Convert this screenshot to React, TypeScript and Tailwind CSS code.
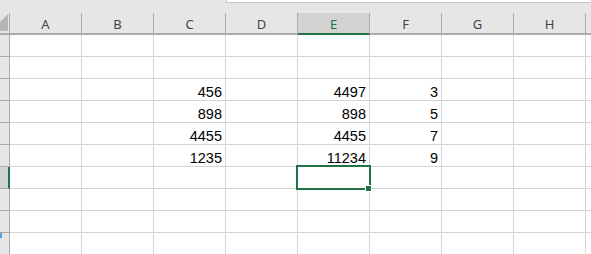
const columns = ["A", "B", "C", "D", "E", "F", "G", "H", "I"];

// values keyed by row index (1-based), then column letter
const data: Record<number, Record<string, string>> = {
  3: { C: "456", E: "4497", F: "3" },
  4: { C: "898", E: "898", F: "5" },
  5: { C: "4455", E: "4455", F: "7" },
  6: { C: "1235", E: "11234", F: "9" },
};

const rows = [1, 2, 3, 4, 5, 6, 7, 8, 9, 10];
const activeCol = "E";
const activeRow = 7;

function ColumnHeader({ name }: { name: string }) {
  const active = name === activeCol;
  // column I is mostly off screen, its letter is not visible
  const label = name === "I" ? "" : name;
  return (
    <div
      className={`w-[72px] shrink-0 h-full flex justify-center pt-[2px] text-[13px] border-r border-[#ababab] border-b-2 ${
        active ? "bg-[#d2d2d2] border-b-[#217346] text-[#217346]" : "border-b-[#ababab] text-[#444444]"
      }`}
      style={{ fontFamily: '"Noto Sans", "Open Sans", sans-serif' }}
    >
      {label}
    </div>
  );
}

function Cell({ row, col }: { row: number; col: string }) {
  const value = data[row]?.[col];
  const selected = row === activeRow && col === activeCol;
  return (
    <div className="relative w-[72px] shrink-0 h-full border-r border-b border-[#d4d4d4] flex items-end justify-end pr-[3px] pb-[1px]">
      {value && (
        <span
          className="text-[14.5px] leading-none text-black"
          style={{ fontFamily: '"Liberation Sans", Arial, sans-serif' }}
        >
          {value}
        </span>
      )}
      {selected && (
        <>
          <div className="absolute -left-[2px] -top-[2px] w-[75px] h-[25px] border-2 border-[#217346] z-10" />
          <div className="absolute left-[67px] top-[18px] w-[7px] h-[7px] bg-[#217346] border border-white z-20" />
        </>
      )}
    </div>
  );
}

export default function App() {
  return (
    <div className="w-[591px] h-[254px] overflow-hidden bg-white select-none">
      {/* formula bar edge */}
      <div className="h-[13px] bg-[#e6e6e6] flex">
        <div className="w-[226px] shrink-0" />
        <div className="flex-1 h-[3px] bg-white border-b border-l border-[#c6c6c6]" />
      </div>

      {/* column headers */}
      <div className="h-[22px] flex bg-[#e6e6e6]">
        <div className="w-[10px] shrink-0 h-full border-r border-[#ababab] border-b-2 border-b-[#ababab]">
          <svg width="9" height="20" viewBox="0 0 9 20">
            <polygon points="8,1 8,18 0,18 0,9" fill="#b5b5b5" />
          </svg>
        </div>
        {columns.map((c) => (
          <ColumnHeader key={c} name={c} />
        ))}
      </div>

      {/* grid */}
      {rows.map((r) => (
        <div key={r} className="h-[22px] flex">
          <div
            className={`w-[10px] shrink-0 h-full border-b border-[#ababab] flex items-start ${
              r === activeRow
                ? "bg-[#d2d2d2] border-r-2 border-r-[#217346]"
                : "bg-[#e6e6e6] border-r border-r-[#ababab]"
            }`}
          >
            {r === 10 && <div className="w-[2px] h-[5px] bg-[#4aa3e8]" />}
          </div>
          {columns.map((c) => (
            <Cell key={c} row={r} col={c} />
          ))}
        </div>
      ))}
    </div>
  );
}
